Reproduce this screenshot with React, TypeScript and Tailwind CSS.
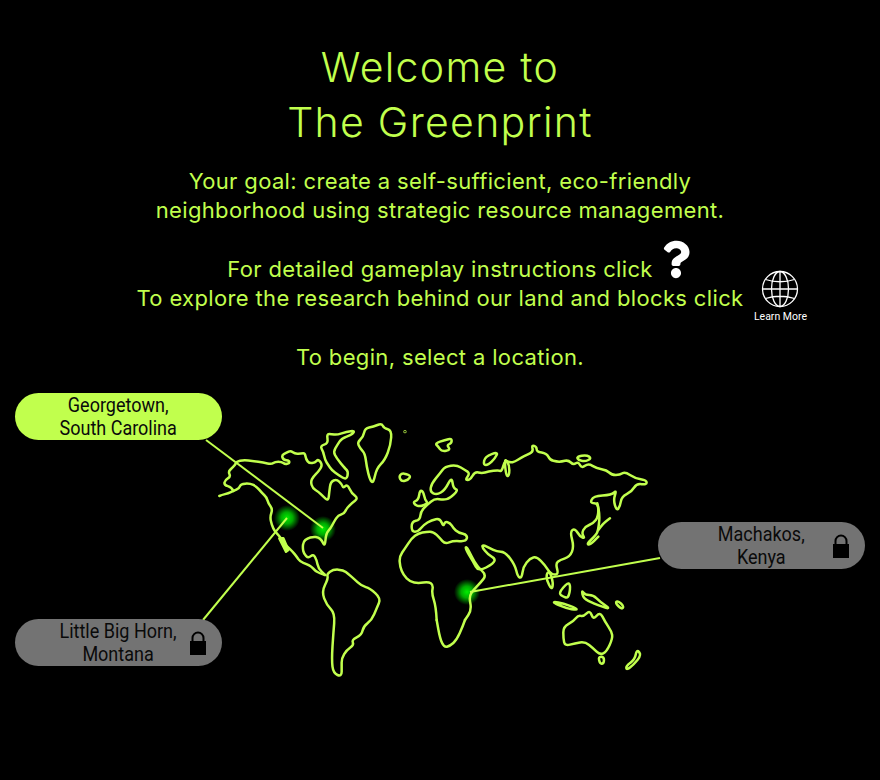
import React from 'react';
import { FaQuestion } from 'react-icons/fa';

const LIME = '#c1ff4d';

const Lock = () => (
    <svg width="18" height="26" viewBox="0 0 18 26">
        <path d="M3.500 12V8a5.500 5.500 0 0 1 11 0v4" fill="none" stroke="#000" strokeWidth="2" />
        <rect x="1" y="11" width="16" height="14" fill="#000" />
    </svg>
);

const Globe = () => (
    <svg width="38" height="38" viewBox="0 0 38 38" fill="none" stroke="#fff" strokeWidth="1.300">
        <circle cx="19" cy="19" r="17.500" />
        <ellipse cx="19" cy="19" rx="8.500" ry="17.500" />
        <path d="M19 1.500v35M1.500 19h35M4.500 9.500q14.500 4.500 29 0M4.500 28.500q14.500-4.500 29 0" />
    </svg>
);

const Pill = ({ lines, locked, className }: any) => (
    <div
        className={`absolute w-[207px] h-[47px] rounded-[24px] flex items-center justify-center text-[#0a0a0a] text-[20px] leading-[23px] font-['Roboto',sans-serif] ${locked ? 'bg-[#737373]' : 'bg-[#c1ff4d]'} ${className}`}
    >
        <div className="text-center scale-x-[0.9]">
            {lines.map((l: string) => (
                <div key={l} className="whitespace-nowrap">{l}</div>
            ))}
        </div>
        {locked && (
            <div className="absolute right-[15px] top-[11px] flex">
                <Lock />
            </div>
        )}
    </div>
);

// rounds the traced coast points so the outlines don't look polygonal
const Coast = ({ d }: { d: string }) => {
    const n = d.match(/-?[\d.]+/g)!.map(Number);
    const p: number[][] = [];
    for (let i = 0; i < n.length; i += 2) p.push([n[i], n[i + 1]]);
    const closed = d.trim().endsWith('Z');
    const mid = (a: number[], b: number[]) => `${(a[0] + b[0]) / 2} ${(a[1] + b[1]) / 2}`;
    let out = '';
    if (closed) {
        out = `M${mid(p[p.length - 1], p[0])}`;
        p.forEach((c, i) => {
            out += `Q${c[0]} ${c[1]} ${mid(c, p[(i + 1) % p.length])}`;
        });
        out += 'Z';
    } else {
        out = `M${p[0][0]} ${p[0][1]}`;
        for (let i = 1; i < p.length - 1; i++) out += `Q${p[i][0]} ${p[i][1]} ${mid(p[i], p[i + 1])}`;
        out += `L${p[p.length - 1][0]} ${p[p.length - 1][1]}`;
    }
    return <path d={out} />;
};

const WorldMap = () => (
    <svg width="880" height="780" viewBox="0 0 880 780" fill="none" className="absolute left-0 top-0">
        <defs>
            <radialGradient id="glow">
                <stop offset="0%" stopColor="#00f000" />
                <stop offset="45%" stopColor="#00c800" stopOpacity="0.85" />
                <stop offset="100%" stopColor="#00b400" stopOpacity="0" />
            </radialGradient>
        </defs>

        <circle cx="287" cy="518" r="13" fill="url(#glow)" />
        <circle cx="323" cy="529" r="13" fill="url(#glow)" />
        <circle cx="467" cy="592" r="13" fill="url(#glow)" />

        {/* americas */}
        <g transform="translate(200 410) scale(0.3333)" stroke={LIME} strokeWidth="7.500" strokeLinejoin="round" strokeLinecap="round">
            <Coast d="M58 258L65 255L85 250L100 243L118 235L122 222L150 220L170 230L185 248L200 262L205 280L218 298L210 320L215 345L225 365L240 380L250 398L262 410L278 425L290 440L300 455L320 462L335 470L345 482L360 490L375 495" />
            <Coast d="M100 243L95 232L72 225L75 210L92 200L85 185L95 175L105 165L110 155L130 150L160 153L190 158L215 163L225 155L245 155L255 163L268 160L268 152L250 150L245 135L260 128L272 122L285 132L305 130L315 130L318 148L328 160L345 158L355 147L368 165L355 185L340 200L332 215L338 235L355 245L370 260L385 273L388 245L392 215L410 208L425 222L430 235L442 222L455 250L475 265L455 280L440 295L432 312L415 315L402 335L392 355L378 370L375 410L365 390L355 382L340 380L322 385L310 395L308 415L312 432L325 445L340 432L350 450L355 475L375 495" />
            <Coast d="M360 108L385 100L380 72L395 72L410 75L440 65L465 62L455 75L425 85L412 105L400 125L410 145L435 175L445 185L440 210L415 195L395 180L385 165L375 150L370 125Z" />
            <path d="M238 385L250 385L265 420L258 425Z" fill={LIME} />
            <Coast d="M472 97L490 80L495 55L520 50L545 40L552 55L575 60L572 105L555 150L530 175L520 220L510 210L500 170L495 130L480 115Z" />
            <Coast d="M597 200L605 190L620 192L632 198L625 210L605 215Z" />
            <circle cx="615" cy="65" r="1" />
        </g>

        {/* africa, eurasia */}
        <g transform="translate(390 420) scale(0.3333)" stroke={LIME} strokeWidth="7.500" strokeLinejoin="round" strokeLinecap="round">
            <Coast d="M140 600L138 560L125 520L130 495L115 485L85 490L60 485L40 465L30 440L28 410L45 385L65 355L85 340L110 335L130 335L150 355L165 372L190 362L228 365L233 345L205 338L190 325L180 308L165 305L160 320L150 295L125 300L100 315L85 335L65 335L65 305L90 300L92 275L110 255L135 235L160 240L180 235L205 210L190 205L185 170L165 210L140 225L120 215L125 190L150 160L165 140L200 135L225 150L240 160L225 180L240 180L255 155L275 160L295 155L325 150L335 155L345 120L360 128L375 125L395 112L410 105L430 95L425 75L440 80L440 95L470 100L480 120L500 125L515 125L535 120L550 135L565 125L575 145L595 130L620 145L650 150L665 165L690 165L705 155L735 175L770 180L770 195L740 190L725 215L695 230L690 260L680 272L670 240L680 210L665 225L610 228L600 250L625 250L625 290L610 310L585 320L575 340L585 355L570 350L555 325L540 335L552 380L540 410L510 420L497 430L505 460L495 465L480 460L465 435L440 410L420 415L400 440L395 475L383 470L375 435L345 395L320 395L300 385L280 375L275 380L295 405L315 415L312 430L265 455L250 425L225 385L230 380L245 410L262 440L290 465L270 490L250 510L237 530L245 570L225 600" />
            <Coast d="M70 245L85 240L90 210L100 215L105 240L115 250L90 260L75 255Z" />
            <Coast d="M135 70L165 60L185 55L185 70L170 75L182 90L155 95L145 80Z" />
            <Coast d="M280 135L285 110L325 95L315 115L295 135Z" />
            <Coast d="M345 115L358 135L358 165L350 170L345 140Z" />
            <Coast d="M622 250L630 280L625 330L618 345L590 372L600 375L625 350" />
            <Coast d="M660 295L640 310L625 330" />
            <Coast d="M560 110L590 105L605 115L585 125L565 120Z" />
            <Coast d="M470 460L480 455L490 490L485 510L470 480Z" />
        </g>

        {/* south america, south africa, oceania */}
        <g transform="translate(300 560) scale(0.3333)" stroke={LIME} strokeWidth="7.500" strokeLinejoin="round" strokeLinecap="round">
            <Coast d="M80 42L100 28L130 30L145 42L160 55L185 78L210 85L243 115L230 145L215 180L190 200L185 225L155 240L162 255L140 270L125 295L125 320L125 350L100 340L95 300L100 220L105 160L80 135L65 95L85 55Z" />
            <Coast d="M495 180L488 200L470 240L450 258L432 262L420 235L410 180" />
            <Coast d="M760 125L790 130L830 145L830 150L800 145L765 130Z" />
            <Coast d="M775 100L805 65L812 80L805 115L790 110Z" />
            <Coast d="M845 90L850 115L880 130L935 150L900 125L880 105L855 105Z" />
            <Coast d="M945 128L955 122L972 140L965 148Z" />
            <Coast d="M790 200L820 185L835 165L850 170L870 150L880 180L900 155L915 185L935 215L938 235L920 275L900 285L880 265L855 245L825 250L795 258L790 235Z" />
            <Coast d="M895 290L912 290L912 310L900 312Z" />
            <Coast d="M1010 268L1025 285L1000 315L980 330L978 318L1005 298Z" />
        </g>

        {/* connector lines */}
        <g stroke={LIME} strokeWidth="2">
            <path d="M206 440L323 528" />
            <path d="M203 620L287 518" />
            <path d="M470 592L660 558" />
        </g>
    </svg>
);

const App = () => {
    return (
        <div className="relative w-[880px] h-[780px] bg-black overflow-hidden text-[#c1ff4d] font-['Inter',sans-serif]">
            <WorldMap />

            <div className="relative flex flex-col items-center pt-[40px] text-center">
                <h1 className="text-[41px] leading-[55px] font-light tracking-[1.300px]">
                    Welcome to
                    <br />
                    The Greenprint
                </h1>
                <p className="mt-[17px] text-[22px] leading-[29.300px] tracking-[0.350px]">
                    Your goal: create a self-sufficient, eco-friendly
                    <br />
                    neighborhood using strategic resource management.
                    <br />
                    <br />
                    <span className="relative">
                        For detailed gameplay instructions click
                        <span className="absolute left-full top-[-18px] ml-[9px] text-white">
                            <FaQuestion className="w-[28px] h-[43px]" />
                        </span>
                    </span>
                    <br />
                    <span className="relative">
                        To explore the research behind our land and blocks click
                        <span className="absolute left-full top-[-15px] ml-[2px] w-[70px] flex flex-col items-center text-white">
                            <Globe />
                            <span className="mt-[2px] text-[10.500px] leading-[14px] tracking-normal font-['Roboto',sans-serif] whitespace-nowrap">Learn More</span>
                        </span>
                    </span>
                    <br />
                    <br />
                    To begin, select a location.
                </p>
            </div>

            <Pill lines={['Georgetown,', 'South Carolina']} className="left-[15px] top-[393px]" />
            <Pill lines={['Little Big Horn,', 'Montana']} locked className="left-[15px] top-[619px]" />
            <Pill lines={['Machakos,', 'Kenya']} locked className="left-[658px] top-[522px]" />
        </div>
    );
};

export default App;
